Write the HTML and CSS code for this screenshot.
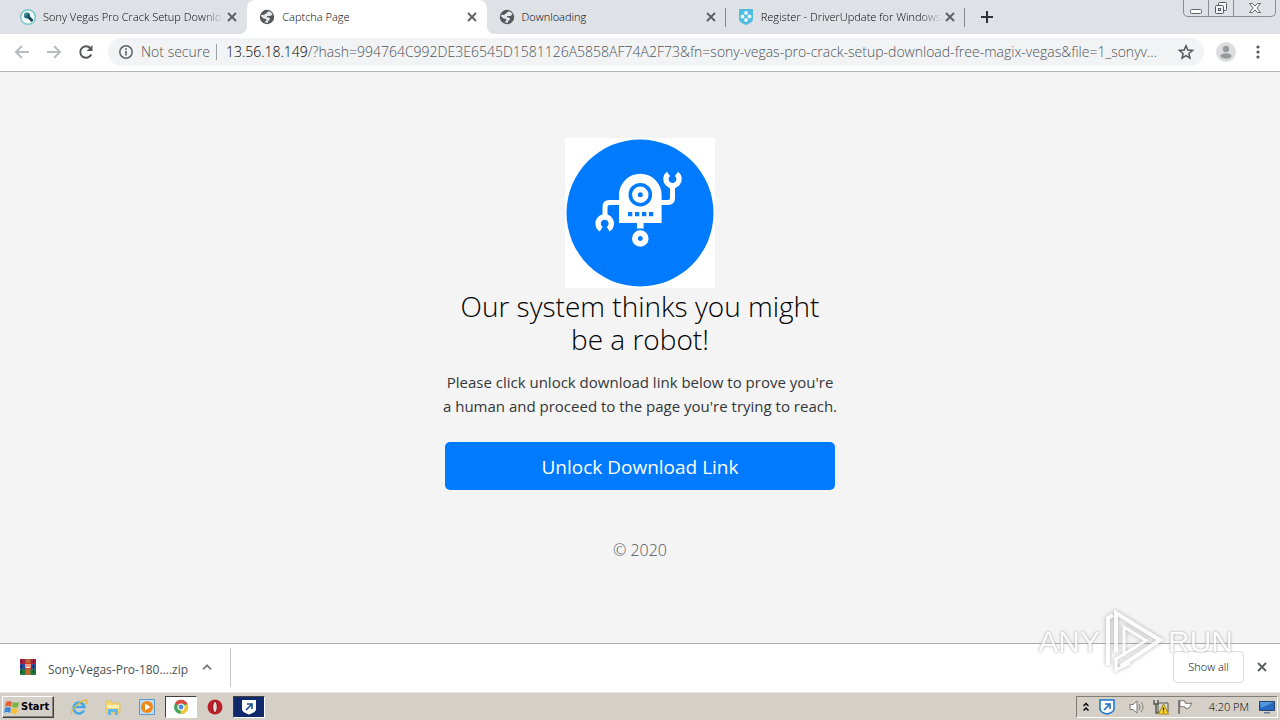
FILE: index.html
```html
<!DOCTYPE html>
<html lang="en">
<head>
<meta charset="utf-8">
<title>Captcha Page</title>
<link rel="stylesheet" href="styles.css">
</head>
<body>
<svg class="defs" aria-hidden="true">
  <symbol id="close" viewBox="0 0 10 10"><path d="M1 1l8 8M9 1L1 9" fill="none" stroke="currentColor" stroke-width="1.800"/></symbol>
  <symbol id="globe" viewBox="0 0 16 16"><circle cx="8" cy="8" r="7.200" fill="#54575c"/><path d="M9.500 2.300q2.500 0 4 3L11.500 7H8.700q-1 .2-1.200 1.200l2.500.3q1.500.8.8 2.300L9 12.300v1.500q-2 .2-3.500-.8l2-1.500-.5-1.400-2.500-.6-2.400-2.200.2-1.500 2.500.2L7 4.500z" fill="#e6e8ea"/></symbol>
  <symbol id="shield" viewBox="0 0 16 16"><path d="M1 1h14v9c0 2.500-3 4-7 5.500C4 14 1 12.500 1 10z" fill="currentColor"/></symbol>
</svg>
<div class="desktop">
  <header class="tabstrip">
    <nav class="tabs">
      <div class="tab">
        <svg class="favicon" viewBox="0 0 16 16"><circle cx="8" cy="8" r="7.300" fill="#f1f7f7" stroke="#73c7c8" stroke-width="1.400"/><circle cx="7" cy="6.600" r="3" fill="#176774"/><path d="M8.500 8l4 4" stroke="#123f50" stroke-width="2.600"/><path d="M5 6.500l2-2" stroke="#9fe0df"/></svg>
        <a class="title fade" href="#">Sony Vegas Pro Crack Setup Downlo</a>
        <button class="x" aria-label="Close tab"><svg><use href="#close"/></svg></button>
      </div>
      <div class="tab active">
        <svg class="favicon"><use href="#globe"/></svg>
        <a class="title" href="#">Captcha Page</a>
        <button class="x" aria-label="Close tab"><svg><use href="#close"/></svg></button>
      </div>
      <div class="tab divided">
        <svg class="favicon"><use href="#globe"/></svg>
        <a class="title" href="#">Downloading</a>
        <button class="x" aria-label="Close tab"><svg><use href="#close"/></svg></button>
      </div>
      <div class="tab divided">
        <svg class="favicon" viewBox="0 0 16 16"><path d="M1 0h14v10c0 3-3.500 4.500-7 6-3.500-1.500-7-3-7-6z" fill="#4fbce0"/><g fill="#e9f8fd"><circle cx="8" cy="4" r="1.900"/><circle cx="8" cy="11" r="1.900"/><circle cx="4.500" cy="7.500" r="1.900"/><circle cx="11.500" cy="7.500" r="1.900"/></g></svg>
        <a class="title fade" href="#">Register - DriverUpdate for Windows</a>
        <button class="x" aria-label="Close tab"><svg><use href="#close"/></svg></button>
      </div>
    </nav>
    <button class="newtab" aria-label="New tab"><svg viewBox="0 0 12 12"><path d="M6 0v12M0 6h12" stroke="#2e3238" stroke-width="2"/></svg></button>
    <div class="winctl">
      <button aria-label="Minimize"><svg viewBox="0 0 14 14"><rect x="1.500" y="8.500" width="11" height="4" rx="1" fill="#fff" stroke="#63666c"/></svg></button>
      <button aria-label="Restore"><svg viewBox="0 0 14 14"><g fill="#f4f5f7" stroke="#54575d"><rect x="4.500" y="1.500" width="8" height="8" rx="1"/><rect x="1.500" y="4.500" width="8" height="8" rx="1"/><rect x="4.500" y="7.500" width="2" height="2"/></g></svg></button>
      <button class="wide" aria-label="Close"><svg viewBox="0 0 14 14"><path d="M1.500 2.500h3L7 5l2.500-2.500h3L9 7l3.500 4.500h-3L7 9l-2.500 2.500h-3L5 7z" fill="#fff" stroke="#63666c"/></svg></button>
    </div>
  </header>

  <div class="toolbar">
    <button class="nav off" aria-label="Back"><svg viewBox="0 0 16 16"><path d="M15 8H2M8 2L2 8l6 6"/></svg></button>
    <button class="nav off" aria-label="Forward"><svg viewBox="0 0 16 16"><path d="M1 8h13M8 2l6 6-6 6"/></svg></button>
    <button class="nav" aria-label="Reload"><svg viewBox="0 0 16 16"><path d="M13.300 10.500A5.800 5.800 0 1 1 12.300 4"/><path d="M14.500 1v6h-6z" fill="#54575c" stroke="none"/></svg></button>
    <div class="omnibox">
      <svg class="info" viewBox="0 0 16 16"><circle cx="8" cy="8" r="6.200" fill="none" stroke="#5f6368" stroke-width="1.500"/><path d="M8 7v4.500M8 4.300v1.600" stroke="#5f6368" stroke-width="1.600"/></svg>
      <span class="secure">Not secure</span>
      <span class="url"><b>13.56.18.149</b>/?hash=994764C992DE3E6545D1581126A5858AF74A2F73&amp;fn=sony-vegas-pro-crack-setup-download-free-magix-vegas&amp;file=1_sonyv...</span>
      <button class="star" aria-label="Bookmark this page"><svg viewBox="0 0 16 16"><path d="M8 1.800l1.800 4.300 4.700.4-3.600 3 1.100 4.600L8 11.700l-4 2.400 1.100-4.600-3.600-3 4.700-.4z" fill="none" stroke="#54575c" stroke-width="1.500"/></svg></button>
    </div>
    <button class="avatar" aria-label="Profile"><svg viewBox="0 0 20 20"><circle cx="10" cy="10" r="10" fill="#dcdddf"/><circle cx="10" cy="7" r="3.200" fill="#98999c"/><ellipse cx="10" cy="14" rx="5.500" ry="2.700" fill="#98999c"/></svg></button>
    <button class="more" aria-label="Menu"><svg viewBox="0 0 4 14"><g fill="#54575c"><circle cx="2" cy="2" r="1.600"/><circle cx="2" cy="7" r="1.600"/><circle cx="2" cy="12" r="1.600"/></g></svg></button>
  </div>

  <main class="page">
    <section class="captcha">
      <svg class="robot" viewBox="0 0 150 150" role="img" aria-label="Robot">
        <rect width="150" height="150" fill="#fff"/>
        <circle cx="75" cy="75" r="73.500" fill="#007bff"/>
        <path d="M54 85V57a21.300 21.300 0 0 1 42.600 0v28z" fill="#fff"/>
        <circle cx="75.300" cy="56.700" r="10" fill="#fff" stroke="#007bff" stroke-width="3.600"/>
        <circle cx="75.300" cy="56.700" r="2.500" fill="#007bff"/>
        <path d="M63 74h4.300v4.300H63zM70 74h4.300v4.300H70zM77 74h4.300v4.300H77zM84 74h4.300v4.300H84z" fill="#007bff"/>
        <path d="M72 85h6.600v5.500H72z" fill="#fff"/>
        <circle cx="75.300" cy="100.500" r="5.300" fill="#007bff" stroke="#fff" stroke-width="6"/>
        <circle cx="75.300" cy="100.500" r="2.300" fill="#007bff"/>
        <g fill="none" stroke="#fff">
          <path d="M55 64.500H44.500q-4.500 0-4.500 4.500v9M96 64.500h7q4.500 0 4.500-4.500V48" stroke-width="5"/>
          <path d="M36.200 91.200A6.600 6.600 0 1 1 43.200 91.200" stroke-width="5.400"/>
          <path d="M103.500 35.800A6.600 6.600 0 1 0 111.500 35.800" stroke-width="5.400"/>
        </g>
      </svg>
      <h1>Our system thinks you might be a robot!</h1>
      <p>Please click unlock download link below to prove you're<br>a human and proceed to the page you're trying to reach.</p>
      <button class="unlock">Unlock Download Link</button>
      <footer>© 2020</footer>
    </section>
  </main>

  <div class="downloads">
    <button class="file">
      <svg class="zip" viewBox="0 0 16 16"><path d="M0 0h16v5H0z" fill="#a52345"/><path d="M0 5h16v5H0z" fill="#294d9a"/><path d="M0 10h16v6H0z" fill="#247741"/><path d="M5.500 0h5v16h-5z" fill="#ba6b30"/><path d="M5 4h6v6H5z" fill="#d8382c"/><path d="M6 5v3.500h4V5M8 5v3" fill="none" stroke="#fff3d8"/><path d="M1.500 1v14M13.500 1v14" stroke="#17212e" stroke-dasharray="3 2"/></svg>
      <span>Sony-Vegas-Pro-180....zip</span>
      <svg class="caret" viewBox="0 0 10 6"><path d="M1 5.300l4-4 4 4" fill="none" stroke="#74777b" stroke-width="1.700"/></svg>
    </button>
    <button class="showall">Show all</button>
    <button class="x barx" aria-label="Close downloads bar"><svg><use href="#close"/></svg></button>
  </div>

  <footer class="taskbar">
    <button class="start"><svg viewBox="0 0 16 16"><path d="M2 3q3-2 6 0L7 8q-3-2-6 0z" fill="#e66335"/><path d="M9 3q3 1.500 6 0l-1 5q-3 1.500-6 0z" fill="#77b63c"/><path d="M1 9q3-2 6 0l-1 5q-3-2-6 0z" fill="#3b88d6"/><path d="M8 9q3 1.500 6 0l-1 5q-3 1.500-6 0z" fill="#f3bf34"/></svg>Start</button>
    <div class="apps">
      <button aria-label="Internet Explorer"><svg viewBox="0 0 18 18"><path d="M14 12.500A5.500 5.500 0 1 1 14.500 9H5" fill="none" stroke="#45a9e5" stroke-width="2.600"/><path d="M2 16C-1 13 11 2 16 2c2 0 1 3 0 4" fill="none" stroke="#e3bb38" stroke-width="1.300"/></svg></button>
      <button aria-label="Explorer"><svg viewBox="0 0 18 18"><path d="M2 3h5l1 2h8v10H2z" fill="#f3d574" stroke="#e0c06a"/><path d="M3 7h12v3H3z" fill="#fbefb4"/><path d="M4 17v-6h10v6h-3v-3H7v3z" fill="#65b5e6"/></svg></button>
      <button aria-label="Media Player"><svg viewBox="0 0 18 18"><path d="M1.500 1.500h15v15h-15z" fill="#bcdcf4" stroke="#6097c9"/><circle cx="9" cy="9" r="6" fill="#f18618"/><path d="M7 5.500v7L12.500 9z" fill="#fff"/></svg></button>
      <button class="pressed" aria-label="Chrome"><svg viewBox="0 0 18 18"><circle cx="9" cy="9" r="7" fill="#45a65a"/><path d="M9 9L3 5.400A7 7 0 0 1 15.500 6H9z" fill="#dd4a3d"/><path d="M9 9l6.500-3A7 7 0 0 1 8.500 16z" fill="#f4c534"/><circle cx="9" cy="9" r="3" fill="#4587e8" stroke="#fff" stroke-width="1.200"/></svg></button>
      <button aria-label="Opera"><svg viewBox="0 0 18 18"><circle cx="9" cy="9" r="7.500" fill="#bd2027"/><ellipse cx="9" cy="9" rx="2.300" ry="5.600" fill="#e9dad4" stroke="#7e1117"/></svg></button>
      <button class="pressed blue" aria-label="DriverUpdate"><svg class="sh"><use href="#shield"/></svg><svg class="arrow" viewBox="0 0 16 16"><path d="M5 11l5-5M6 5h5v5" fill="none" stroke="#164b91" stroke-width="1.600"/></svg></button>
    </div>
    <div class="tray">
      <svg class="chev" viewBox="0 0 6 10"><path d="M.5 4L3 1.500 5.500 4M.5 8.500L3 6l2.500 2.500" fill="none" stroke="#000" stroke-width="1.500"/></svg>
      <svg class="upd" viewBox="0 0 16 16"><path d="M1 1h14v9c0 2.500-3 4-7 5-4-1-7-2.500-7-5z" fill="#fff" stroke="#1475c9" stroke-width="1.500"/><path d="M5 11l5-5M6 5h5v5" fill="none" stroke="#1269b7" stroke-width="1.500"/></svg>
      <svg class="vol" viewBox="0 0 16 16"><path d="M1 5.500h3L8 2v12l-4-3.500H1z" fill="#fff" stroke="#777"/><path d="M10 5q2 3 0 6M12 3q4 5 0 10" fill="none" stroke="#85827c"/></svg>
      <svg class="net" viewBox="0 0 16 16"><path d="M5 4h10v9H5z" fill="#d8d8cc" stroke="#55554f"/><path d="M1 1v4h4V1M3 5v9h4" fill="none" stroke="#55554f" stroke-width="1.400"/><path d="M10.500 5l5 10h-10z" fill="#ffd72d" stroke="#a28a10"/><path d="M10.500 8.500v3M10.500 12.500v1" stroke="#111" stroke-width="1.200"/></svg>
      <svg class="flag" viewBox="0 0 16 16"><path d="M2 1v14" stroke="#66645f" stroke-width="1.500"/><path d="M3 2q3-1 5 0v2q3 1 7 0l-3 5q-2 1-4 0V8Q6 7 3 8z" fill="#fff" stroke="#77746d"/></svg>
      <time>4:20 PM</time>
      <svg class="screen" viewBox="0 0 16 16"><path d="M.5 2.500h15v9H.5z" fill="#2469bd" stroke="#27436e"/><path d="M1 3h14L2 9z" fill="#5396dc"/><path d="M5 13h6v1.500H5z" fill="#687d99"/></svg>
    </div>
  </footer>

  <div class="watermark">
    <span>ANY</span>
    <svg viewBox="0 0 60 64"><path d="M4 55V8l5-3M12 42V3l44 27-39 26" fill="none" stroke="#fff" stroke-width="4"/><path d="M20 46V17l22 13.500L12 49v11l14-7" fill="none" stroke="#fff" stroke-width="3"/></svg>
    <span>RUN</span>
  </div>
</div>
</body>
</html>
```
FILE: styles.css
```css
* { box-sizing: border-box; }
body { margin: 0; font: 300 12px/16px "Open Sans", "Noto Sans", sans-serif; color: #212529; }
button { margin: 0; padding: 0; border: 0; background: none; font: inherit; color: inherit; }
svg { display: block; flex: none; }
.defs { position: absolute; width: 0; height: 0; }
.desktop { position: relative; display: flex; flex-direction: column; min-height: 100vh; overflow: hidden; }

.tabstrip { display: flex; height: 34px; background: #dee1e6; padding-left: 8px; }
.tabs { display: flex; flex: 0 1 957px; min-width: 0; }
.tab { position: relative; flex: 1 1 0; min-width: 0; display: flex; align-items: center; padding: 0 10px 0 12px; }
.favicon { width: 16px; height: 16px; margin-right: 7px; }
.title { flex: 1; min-width: 0; overflow: hidden; white-space: nowrap; color: #000; text-decoration: none; font-size: 11px; }
.fade { -webkit-mask-image: linear-gradient(to right, #000 88%, transparent); mask-image: linear-gradient(to right, #000 88%, transparent); }
.x { display: grid; place-items: center; width: 10px; height: 16px; margin-left: 3px; color: #5a5d62; }
.x svg { width: 10px; height: 10px; }
.active { background: #fff; border-radius: 8px 8px 0 0; }
.active::before, .active::after { content: ""; position: absolute; bottom: 0; width: 8px; height: 8px; }
.active::before { left: -8px; background: radial-gradient(circle at 0 0, #dee1e6 8px, #fff 8px); }
.active::after { right: -8px; background: radial-gradient(circle at 100% 0, #dee1e6 8px, #fff 8px); }
.divided::after { content: ""; position: absolute; right: 0; top: 8px; width: 1px; height: 19px; background: #84878d; }
.newtab { width: 44px; display: grid; place-items: center; }
.newtab svg { width: 12px; height: 12px; }
.winctl { margin: 0 4px 0 auto; display: flex; height: 17px; border: 1px solid #8a8d94; border-top: 0; border-radius: 0 0 5px 5px; }
.winctl button { width: 25px; display: grid; place-items: center; border-right: 1px solid #8a8d94; }
.winctl .wide { width: 41px; border: 0; }
.winctl svg { width: 14px; height: 14px; }

.toolbar { display: flex; align-items: center; height: 38px; padding: 0 20px 2px 14px; background: #fff; border-bottom: 1px solid #b4b6b5; }
.nav { width: 16px; margin-right: 16px; }
.nav svg { width: 16px; height: 16px; fill: none; stroke: #54575c; stroke-width: 2; }
.nav.off svg { stroke: #b9bbbe; }
.nav:nth-child(3) { margin-right: 14px; }
.omnibox { flex: 1; min-width: 0; display: flex; align-items: center; height: 28px; padding: 0 10px; border-radius: 14px; background: #f1f3f4; font-size: 14px; line-height: 20px; color: #4f5359; }
.info { width: 16px; height: 16px; margin-right: 7px; }
.secure { padding-right: 6px; border-right: 1px solid #9da0a4; line-height: 16px; white-space: nowrap; }
.url { flex: 1; min-width: 0; margin-left: 9px; overflow: hidden; white-space: nowrap; }
.url b { font-weight: 300; color: #000; }
.star { margin-left: 8px; }
.star svg { width: 16px; height: 16px; }
.avatar { margin: 0 20px 0 12px; }
.avatar svg { width: 20px; height: 20px; }
.more svg { width: 4px; height: 14px; }

.page { flex: 1; display: flex; justify-content: center; background: #f4f4f4; padding-top: 66px; }
.captcha { display: flex; flex-direction: column; align-items: center; width: 390px; max-width: 100%; text-align: center; }
.robot { width: 150px; height: 150px; }
h1 { margin: 2px 0 14px; font-weight: 300; font-size: 28px; line-height: 33px; color: #000; }
p { margin: 0 0 24px; font-weight: 400; font-size: 15px; line-height: 24px; white-space: nowrap; color: #333639; }
.unlock { width: 100%; padding: 10px 16px 8px; border-radius: 5px; background: #007bff; color: #fff; font-weight: 400; font-size: 19px; line-height: 30px; }
.captcha footer { margin-top: 48px; font-size: 16px; line-height: 24px; color: #4c535b; }

.downloads { display: flex; align-items: center; height: 49px; padding: 0 13px 2px 0; background: #fff; border-top: 1px solid #aaa; }
.file { display: flex; align-items: center; width: 231px; height: 39px; padding-left: 20px; border-right: 1px solid #c6c8ca; font-weight: 400; color: #4c5054; }
.zip { width: 16px; height: 16px; margin-right: 12px; }
.file span { padding-top: 5px; }
.caret { width: 10px; height: 6px; margin-left: 14px; }
.showall { width: 71px; height: 32px; margin-left: auto; border: 1px solid #dadce0; border-radius: 4px; background: #fff; font-size: 11px; color: #000; }
.barx { margin-left: 13px; }

.taskbar { display: flex; align-items: center; height: 28px; padding: 1px 2px 0; background: #d4d0c8; border-top: 1px solid #e9e7e3; }
.start { display: flex; align-items: center; gap: 1px; width: 52px; height: 22px; padding-left: 1px; border: 1px solid; border-color: #fff #404040 #404040 #fff; box-shadow: inset -1px -1px #85827b; font: bold 11px/16px "DejaVu Sans Condensed", "DejaVu Sans", sans-serif; color: #000; white-space: nowrap; }
.start svg { width: 16px; height: 16px; }
.apps { display: flex; margin-left: 9px; gap: 2px; }
.apps button { display: grid; place-items: center; width: 32px; height: 22px; }
.apps svg { grid-area: 1 / 1; width: 18px; height: 18px; }
.apps .pressed { border: 1px solid; border-color: #404040 #fff #fff #404040; background: #fff; }
.apps .blue { background: #10296b; }
.apps .blue svg { width: 16px; height: 16px; color: #fff; }
.tray { display: flex; align-items: center; height: 22px; margin-left: auto; padding: 0 2px 0 6px; border: 1px solid; border-color: #807d76 #fff #fff #807d76; font-size: 11px; color: #000; }
.tray svg { width: 16px; height: 16px; }
.tray .chev { width: 6px; height: 10px; margin-right: 10px; }
.tray .upd { margin-right: 14px; }
.tray .vol, .tray .net { margin-right: 8px; }
.tray time { margin: 0 10px 0 16px; }

.watermark { position: absolute; right: 47px; bottom: 46px; display: flex; align-items: center; pointer-events: none; color: #fff; font: 30px/64px "Liberation Sans", sans-serif; text-shadow: 0 0 3px #999, 0 0 1px #aaa; opacity: 0.8; }
.watermark svg { width: 60px; height: 64px; margin: 0 4px; filter: drop-shadow(0 0 2px #999); }
```
